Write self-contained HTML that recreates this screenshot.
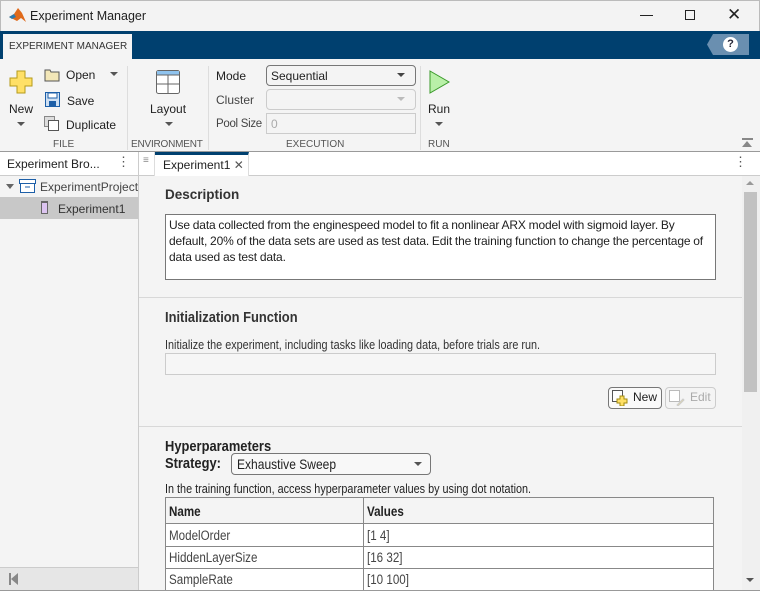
<!DOCTYPE html>
<html><head><meta charset="utf-8"><style>
*{box-sizing:border-box;margin:0;padding:0}
html,body{width:760px;height:591px;overflow:hidden}
body{background:#f4f4f4;font-family:"Liberation Sans",Arial,sans-serif;position:relative;color:#212121}
.a{position:absolute;white-space:nowrap}
.t12{font-size:12px}
.bold{font-weight:bold}
.lbl{font-size:10px;color:#555;position:absolute}
.nc{transform:scaleX(0.86);transform-origin:0 0}
.tc{transform:scaleX(0.86);transform-origin:0 0}
</style></head><body>
<!-- title bar -->
<div class="a" style="left:0;top:0;width:760px;height:31px;background:#f3f3f3;border:1px solid #bbb;border-bottom:none"></div>
<svg class="a" style="left:9px;top:7px" width="17" height="16" viewBox="0 0 17 16"><path d="M0 10 L5 7 L9 1 L13 6 L17 15 L12 11 L8 14 Z" fill="#e06a1b"/><path d="M0 10 L5 7 L7 10 L3 12Z" fill="#2a7ab0"/></svg>
<div class="a t12" style="left:30px;top:9px;font-size:12.5px">Experiment Manager</div>
<div class="a" style="left:640px;top:15px;width:13px;height:1px;background:#222"></div>
<div class="a" style="left:685px;top:10px;width:10px;height:10px;border:1px solid #222"></div>
<div class="a" style="left:727px;top:5px;font-size:17px;color:#222">✕</div>
<!-- blue strip -->
<div class="a" style="left:0;top:31px;width:760px;height:28px;background:#00406f"></div>
<div class="a" style="left:3px;top:34px;width:129px;height:25px;background:#f4f4f4;font-size:10px;color:#333;padding:7px 0 0 6px">EXPERIMENT MANAGER</div>
<div class="a" style="left:707px;top:34px;width:42px;height:21px;background:#6a8fb0;clip-path:polygon(6px 0,100% 0,100% 100%,6px 100%,0 50%)"></div>
<div class="a" style="left:723px;top:37px;width:15px;height:15px;border-radius:50%;background:#fff;font-size:11px;font-weight:bold;text-align:center;line-height:15px;color:#223">?</div>
<!-- toolstrip -->
<div class="a" style="left:0;top:59px;width:760px;height:93px;background:#f4f4f4;border-bottom:1px solid #9a9a9a"></div>
<svg class="a" style="left:9px;top:70px" width="24" height="24"><path d="M8 1h8v7h7v8h-7v7H8v-7H1V8h7z" fill="#ffe066" stroke="#b59a1a"/></svg>
<div class="a t12" style="left:9px;top:102px">New</div>
<div class="a" style="left:17px;top:122px;border:4px solid transparent;border-top:4px solid #555"></div>
<svg class="a" style="left:44px;top:68px" width="16" height="14"><path d="M1 2h5l1 2h8v9H1z" fill="#f3e7b8" stroke="#555"/></svg>
<div class="a t12" style="left:66px;top:68px">Open</div>
<div class="a" style="left:110px;top:72px;border:4px solid transparent;border-top:4px solid #555"></div>
<svg class="a" style="left:45px;top:92px" width="15" height="15"><rect x="0.5" y="0.5" width="14" height="14" fill="#cfe0f3" stroke="#1d5fa8"/><rect x="3" y="1" width="9" height="5" fill="#fff" stroke="#1d5fa8"/><rect x="4" y="9" width="7" height="5" fill="#1d5fa8"/></svg>
<div class="a t12" style="left:67px;top:94px">Save</div>
<svg class="a" style="left:44px;top:116px" width="16" height="16"><rect x="0.5" y="0.5" width="10" height="10" fill="#ddd" stroke="#888"/><rect x="4.5" y="4.5" width="10" height="10" fill="#fff" stroke="#555"/></svg>
<div class="a t12" style="left:66px;top:118px">Duplicate</div>
<div class="lbl" style="left:53px;top:139px">FILE</div>
<div class="a" style="left:127px;top:66px;width:1px;height:84px;background:#ddd"></div>
<svg class="a" style="left:156px;top:70px" width="24" height="24"><rect x="0.5" y="0.5" width="23" height="23" rx="2" fill="#fff" stroke="#666"/><rect x="1" y="1" width="22" height="4" fill="#8fc3ee"/><path d="M1 5h22M12 5v18M1 14h22" stroke="#666"/></svg>
<div class="a t12" style="left:150px;top:102px">Layout</div>
<div class="a" style="left:165px;top:122px;border:4px solid transparent;border-top:4px solid #555"></div>
<div class="lbl" style="left:131px;top:139px;letter-spacing:-0.2px">ENVIRONMENT</div>
<div class="a" style="left:208px;top:66px;width:1px;height:84px;background:#ddd"></div>
<div class="a t12" style="left:216px;top:69px">Mode</div>
<div class="a" style="left:266px;top:65px;width:150px;height:21px;border:1px solid #777;border-radius:4px;background:#f4f4f4;font-size:12px;padding:3px 4px">Sequential</div>
<div class="a" style="left:397px;top:73px;border:4px solid transparent;border-top:4px solid #444"></div>
<div class="a t12" style="left:216px;top:93px;color:#444">Cluster</div>
<div class="a" style="left:266px;top:89px;width:150px;height:21px;border:1px solid #ccc;border-radius:4px"></div>
<div class="a" style="left:397px;top:97px;border:4px solid transparent;border-top:4px solid #bbb"></div>
<div class="a" style="left:216px;top:118px;color:#444;font-size:11.5px;letter-spacing:-0.3px">Pool Size</div>
<div class="a" style="left:266px;top:113px;width:150px;height:21px;border:1px solid #ccc;font-size:12px;color:#aaa;padding:3px 4px">0</div>
<div class="lbl" style="left:286px;top:139px">EXECUTION</div>
<div class="a" style="left:420px;top:66px;width:1px;height:84px;background:#ddd"></div>
<svg class="a" style="left:429px;top:70px" width="22" height="24"><path d="M1 1L20 12L1 23Z" fill="#b9f0a8" stroke="#3a9a2a"/></svg>
<div class="a t12" style="left:428px;top:102px">Run</div>
<div class="a" style="left:435px;top:122px;border:4px solid transparent;border-top:4px solid #555"></div>
<div class="lbl" style="left:428px;top:139px">RUN</div>
<div class="a" style="left:742px;top:138px;width:11px;height:2px;background:#888"></div>
<div class="a" style="left:742px;top:141px;border:5px solid transparent;border-bottom:6px solid #888;border-top:0;width:0"></div>
<!-- left panel -->
<div class="a" style="left:0;top:152px;width:139px;height:24px;background:#fff;border-bottom:1px solid #ccc;border-right:1px solid #ccc"></div>
<div class="a t12" style="left:7px;top:157px">Experiment Bro...</div>
<div class="a" style="left:117px;top:154px;font-size:13px;color:#555">⋮</div>
<div class="a" style="left:0;top:176px;width:139px;height:391px;background:#f4f4f4;border-right:1px solid #ccc"></div>
<div class="a" style="left:6px;top:184px;border:4px solid transparent;border-top:5px solid #666"></div>
<svg class="a" style="left:19px;top:179px" width="17" height="14"><rect x="0.5" y="0.5" width="16" height="4" fill="#fff" stroke="#1d5fa8"/><rect x="1.5" y="4.5" width="14" height="9" fill="#fff" stroke="#1d5fa8"/><path d="M6 8h5" stroke="#1d5fa8"/></svg>
<div class="a t12" style="left:40px;top:180px;color:#444">ExperimentProject</div>
<div class="a" style="left:0;top:197px;width:138px;height:22px;background:#c8c8c8"></div>
<div class="a" style="left:41px;top:201px;width:7px;height:13px;border:1px solid #666;background:#dcc4f0;border-top-width:2px"></div>
<div class="a t12" style="left:58px;top:202px;color:#333">Experiment1</div>
<div class="a" style="left:0;top:567px;width:139px;height:24px;background:#e6e6e6;border-top:1px solid #ccc;border-right:1px solid #ccc"></div>
<div class="a" style="left:9px;top:573px;width:2px;height:12px;background:#888"></div>
<div class="a" style="left:11px;top:573px;border:6px solid transparent;border-right:7px solid #888;border-left:0"></div>
<!-- doc tab bar -->
<div class="a" style="left:139px;top:152px;width:621px;height:24px;background:#fff;border-bottom:1px solid #ccc"></div>
<div class="a" style="left:143px;top:155px;font-size:10px;color:#888">≡</div>
<div class="a" style="left:154px;top:152px;width:1px;height:24px;background:#ddd"></div>
<div class="a" style="left:155px;top:152px;width:94px;height:24px;background:#fff;border-top:3px solid #00406f;border-right:1px solid #ddd"></div>
<div class="a t12" style="left:163px;top:158px">Experiment1 <span style="color:#555">✕</span></div>
<div class="a" style="left:734px;top:154px;font-size:13px;color:#555">⋮</div>
<!-- scrollbar -->
<div class="a" style="left:742px;top:176px;width:18px;height:415px;background:#f0f0f0"></div>
<div class="a" style="left:746px;top:181px;border:4px solid transparent;border-bottom:4px solid #999;border-top:0"></div>
<div class="a" style="left:744px;top:192px;width:13px;height:200px;background:#c2c2c2"></div>
<div class="a" style="left:746px;top:578px;border:4px solid transparent;border-top:4px solid #555;border-bottom:0"></div>
<!-- content -->
<div class="a bold" style="left:165px;top:187px;font-size:13.5px;color:#333">Description</div>
<div class="a" style="left:165px;top:214px;width:551px;height:66px;background:#fff;border:1px solid #777;padding:2px 3px;font-size:12px;line-height:16px;white-space:normal;letter-spacing:-0.15px;word-spacing:-0.3px">Use data collected from the enginespeed model to fit a nonlinear ARX model with sigmoid layer. By default, 20% of the data sets are used as test data. Edit the training function to change the percentage of data used as test data.</div>
<div class="a" style="left:139px;top:297px;width:603px;height:1px;background:#d8d8d8"></div>
<div class="a bold nc" style="left:165px;top:309px;font-size:15px;color:#333">Initialization Function</div>
<div class="a nc" style="left:165px;top:338px;font-size:12.6px;color:#333">Initialize the experiment, including tasks like loading data, before trials are run.</div>
<div class="a" style="left:165px;top:353px;width:551px;height:22px;border:1px solid #ccc;background:#f6f6f6"></div>
<div class="a" style="left:608px;top:387px;width:54px;height:22px;border:1px solid #777;border-radius:4px;background:#fafafa"></div>
<svg class="a" style="left:612px;top:390px" width="16" height="16"><rect x="0.5" y="0.5" width="10" height="11" fill="#fff" stroke="#555"/><path d="M8 6h4v3h3v4h-3v3H8v-3H5V9h3z" fill="#ffe066" stroke="#a08a10"/></svg>
<div class="a t12" style="left:633px;top:390px">New</div>
<div class="a" style="left:665px;top:387px;width:51px;height:22px;border:1px solid #ccc;border-radius:4px"></div>
<svg class="a" style="left:669px;top:390px" width="16" height="16"><rect x="0.5" y="0.5" width="10" height="11" fill="#fff" stroke="#bbb"/><path d="M8 15l6-6 1 1-6 6z" fill="#e8d9a0" stroke="#ccc"/></svg>
<div class="a t12" style="left:690px;top:390px;color:#aaa">Edit</div>
<div class="a" style="left:139px;top:426px;width:603px;height:1px;background:#d8d8d8"></div>
<div class="a bold nc" style="left:165px;top:438px;font-size:15px;color:#222">Hyperparameters</div>
<div class="a bold nc" style="left:165px;top:455px;font-size:15px;color:#222">Strategy:</div>
<div class="a" style="left:231px;top:453px;width:200px;height:22px;border:1px solid #777;border-radius:4px;background:#f8f8f8"></div>
<div class="a nc" style="left:237px;top:456px;font-size:14px">Exhaustive Sweep</div>
<div class="a" style="left:414px;top:462px;border:4px solid transparent;border-top:4px solid #555"></div>
<div class="a nc" style="left:165px;top:482px;font-size:12.6px;color:#222">In the training function, access hyperparameter values by using dot notation.</div>
<div class="a" style="left:165px;top:497px;width:549px;height:94px;border:1px solid #888;border-bottom:none;background:#fff"></div>
<div class="a" style="left:166px;top:498px;width:547px;height:26px;background:#f4f4f4;border-bottom:1px solid #888"></div>
<div class="a" style="left:363px;top:498px;width:1px;height:93px;background:#888"></div>
<div class="a" style="left:166px;top:546px;width:547px;height:1px;background:#888"></div>
<div class="a" style="left:166px;top:568px;width:547px;height:1px;background:#888"></div>
<div class="a bold tc" style="left:169px;top:504px;font-size:13.5px;color:#222">Name</div>
<div class="a bold tc" style="left:367px;top:504px;font-size:13.5px;color:#222">Values</div>
<div class="a tc" style="left:169px;top:528px;font-size:13.5px;color:#444">ModelOrder</div>
<div class="a tc" style="left:367px;top:528px;font-size:13.5px;color:#444">[1 4]</div>
<div class="a tc" style="left:169px;top:550px;font-size:13.5px;color:#444">HiddenLayerSize</div>
<div class="a tc" style="left:367px;top:550px;font-size:13.5px;color:#444">[16 32]</div>
<div class="a tc" style="left:169px;top:572px;font-size:13.5px;color:#444">SampleRate</div>
<div class="a tc" style="left:367px;top:572px;font-size:13.5px;color:#444">[10 100]</div>
<div class="a" style="left:0;top:590px;width:760px;height:1px;background:#999"></div>
</body></html>
